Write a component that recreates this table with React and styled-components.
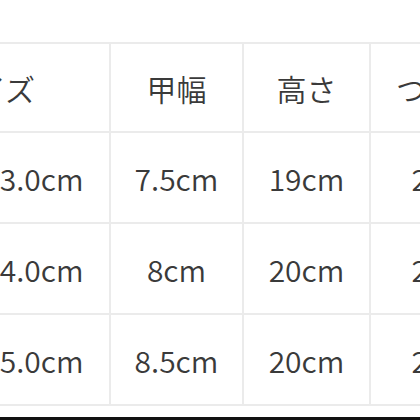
import React from 'react';
import styled, { createGlobalStyle } from 'styled-components';

const GlobalStyle = createGlobalStyle`
  html, body {
    margin: 0;
    padding: 0;
    background: #ffffff;
  }
  body {
    font-family: "Noto Sans CJK JP", "Noto Sans", sans-serif;
  }
`;

const header = [
  { label: 'サイズ', pad: 86 },
  { label: '甲幅' },
  { label: '高さ' },
  { label: 'つま先' },
];

const rows = [
  ['23.0cm', '7.5cm', '19cm', '2cm'],
  ['24.0cm', '8cm', '20cm', '2cm'],
  ['25.0cm', '8.5cm', '20cm', '2cm'],
];

const Page = () => {
  return (
    <>
      <GlobalStyle />
      <Screen>
        <Table>
          {header.map((h, i) => (
            <HeadCell key={i} $pad={h.pad}>
              {h.label}
            </HeadCell>
          ))}
          {rows.map((r, ri) =>
            r.map((v, ci) => (
              <Cell key={ri + '-' + ci}>{v}</Cell>
            ))
          )}
        </Table>
        <Bottom />
      </Screen>
    </>
  );
};

export default Page;

const Screen = styled.div`
  width: 420px;
  height: 420px;
  overflow: hidden;
  display: flex;
  flex-direction: column;
  padding-top: 42px;
  box-sizing: border-box;
`;

const Table = styled.div`
  display: grid;
  grid-template-columns: 151px 131px 125px 140px;
  grid-template-rows: 87px repeat(3, 89px);
  gap: 2px;
  padding: 2px 0;
  margin-left: -42px;
  width: max-content;
  background: #ebebeb;
`;

const Cell = styled.div`
  background: #ffffff;
  display: flex;
  align-items: center;
  justify-content: center;
  padding-right: ${(p) => p.$pad || 0}px;
  box-sizing: border-box;
  font-size: 30px;
  font-weight: 350;
  color: #3a3a3a;
  white-space: nowrap;
`;

const HeadCell = styled(Cell)`
  letter-spacing: 0;
`;

const Bottom = styled.div`
  margin-top: auto;
  height: 3px;
  background: #111111;
`;
